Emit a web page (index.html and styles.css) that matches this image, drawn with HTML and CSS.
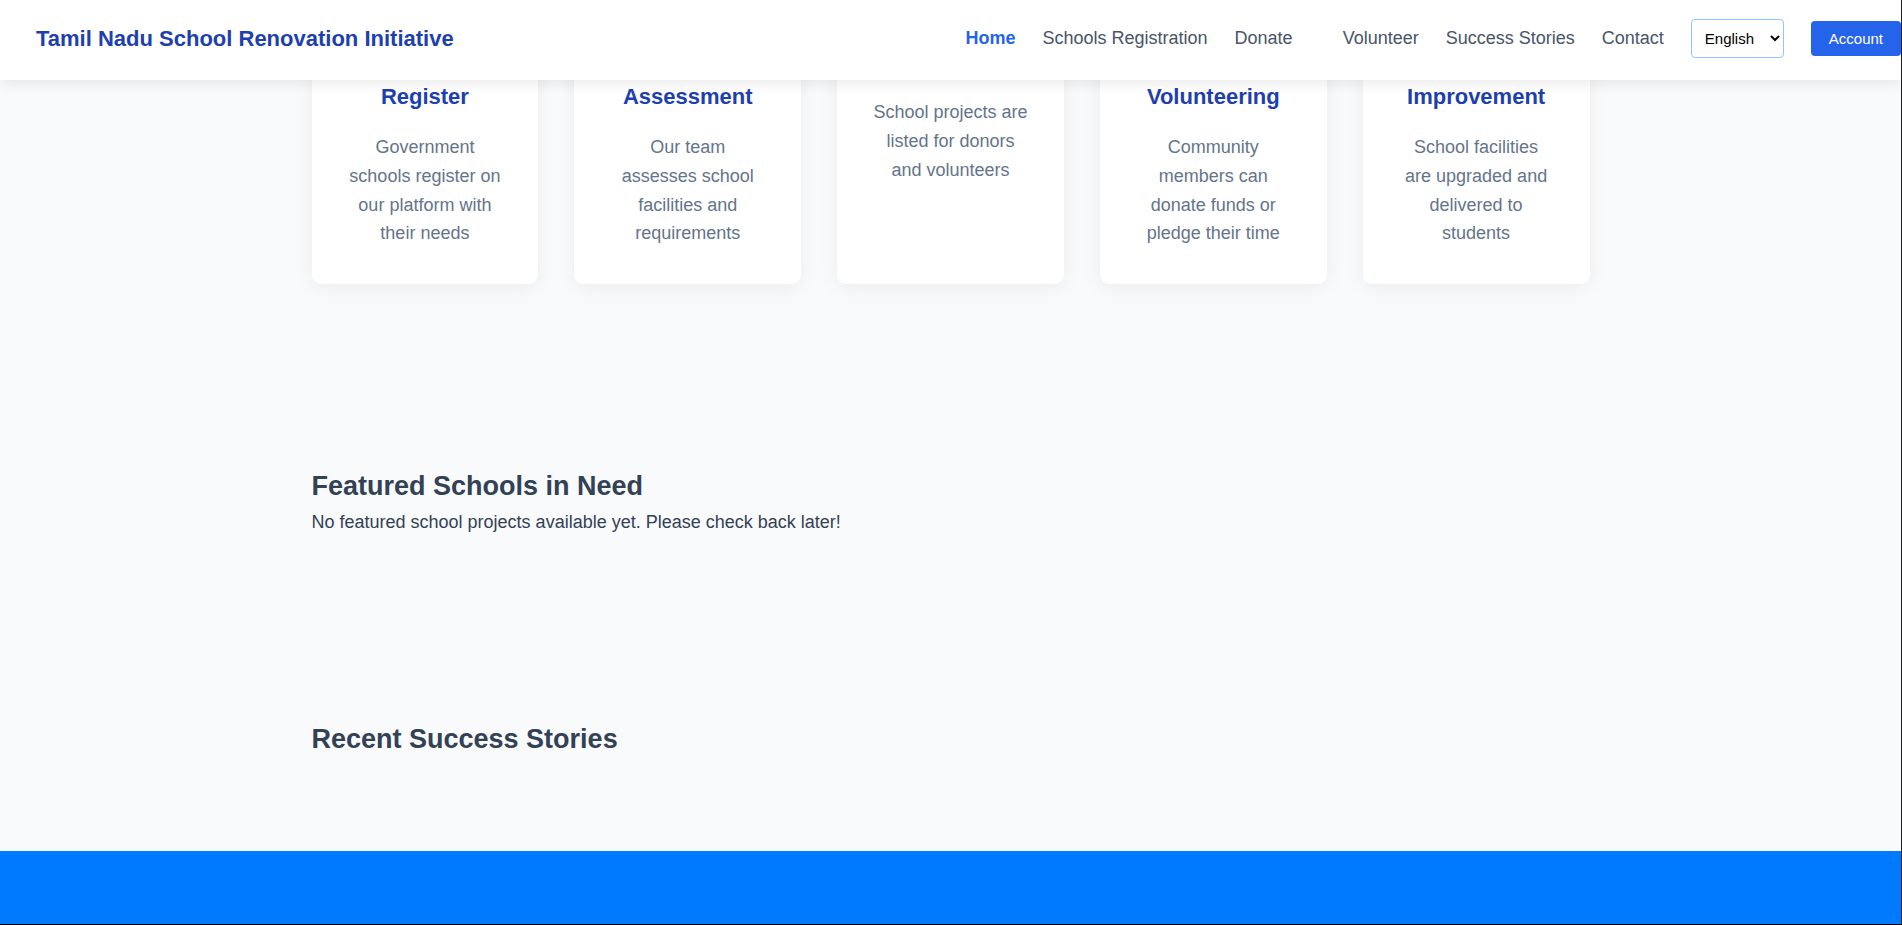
FILE: index.html
```html
<!DOCTYPE html>
<html lang="en">
<head>
<meta charset="utf-8">
<meta name="viewport" content="width=device-width, initial-scale=1">
<title>Tamil Nadu School Renovation Initiative</title>
<link rel="stylesheet" href="styles.css">
</head>
<body>
<header class="site-header">
  <div class="brand">Tamil Nadu School Renovation Initiative</div>
  <nav class="nav">
    <a class="nav-link active" href="#home">Home</a>
    <a class="nav-link" href="#register">Schools Registration</a>
    <a class="nav-link nav-split" href="#donate">Donate</a>
    <a class="nav-link" href="#volunteer">Volunteer</a>
    <a class="nav-link" href="#stories">Success Stories</a>
    <a class="nav-link" href="#contact">Contact</a>
    <select class="language" aria-label="Language"><option>English</option></select>
    <button class="account" type="button">Account</button>
  </nav>
</header>
<main>
  <section class="section steps">
    <div class="step-grid">
      <article class="step">
        <h3>Register</h3>
        <p>Government schools register on our platform with their needs</p>
      </article>
      <article class="step">
        <h3>Assessment</h3>
        <p>Our team assesses school facilities and requirements</p>
      </article>
      <article class="step step-plain">
        <p>School projects are listed for donors and volunteers</p>
      </article>
      <article class="step">
        <h3>Volunteering</h3>
        <p>Community members can donate funds or pledge their time</p>
      </article>
      <article class="step">
        <h3>Improvement</h3>
        <p>School facilities are upgraded and delivered to students</p>
      </article>
    </div>
  </section>
  <section class="section">
    <h2>Featured Schools in Need</h2>
    <p>No featured school projects available yet. Please check back later!</p>
  </section>
  <section class="section" id="stories">
    <h2>Recent Success Stories</h2>
  </section>
</main>
<footer class="site-footer"></footer>
</body>
</html>
```
FILE: styles.css
```css
* {
  box-sizing: border-box;
  margin: 0;
  padding: 0;
}

body {
  display: flex;
  flex-direction: column;
  min-height: 100vh;
  border-right: 1px solid #1c1e21;
  border-bottom: 1px solid #000;
  background: #f9fafc;
  color: #334155;
  font-family: Arial, "Liberation Sans", sans-serif;
  font-size: 18px;
  line-height: 1.6;
}

.site-header {
  position: sticky;
  top: 0;
  z-index: 10;
  display: flex;
  align-items: center;
  justify-content: space-between;
  padding: 19px 0 22px 36px;
  background: #fff;
  box-shadow: 0 4px 12px rgba(0, 0, 0, 0.08);
}

.brand {
  color: #1e40af;
  font-size: 22px;
  font-weight: 700;
}

.nav {
  display: flex;
  align-items: center;
  gap: 27px;
}

.nav-link {
  color: #475569;
  text-decoration: none;
}

.nav-link.active {
  color: #2563eb;
  font-weight: 700;
}

.nav-split {
  margin-right: 23px;
}

.language {
  width: 93px;
  height: 39px;
  padding: 8px 9px;
  border: 1px solid #93c5fd;
  border-radius: 4px;
  background: #fff;
  color: #000;
  font-family: inherit;
  font-size: 15px;
}

.account {
  padding: 9px 18px;
  border: 0;
  border-radius: 4px;
  background: #2563eb;
  color: #fff;
  font-family: inherit;
  font-size: 15px;
}

.section {
  width: 100%;
  max-width: 1350px;
  margin: 0 auto;
  padding: 90px 36px;
}

/* The cards start beneath the sticky header. */
.steps {
  margin-top: -36px;
  padding-top: 0;
}

.step-grid {
  display: grid;
  grid-template-columns: repeat(5, 1fr);
  gap: 36px;
}

.step {
  padding: 36px;
  border-radius: 9px;
  background: #fff;
  box-shadow: 0 4px 20px rgba(0, 0, 0, 0.06);
  text-align: center;
}

.step-plain {
  padding-top: 54px;
}

.step h3 {
  margin-bottom: 19px;
  color: #1e40af;
  font-size: 22px;
  line-height: 34px;
}

.step p {
  color: #64748b;
}

h2 {
  font-size: 27px;
  line-height: 44px;
}

.site-footer {
  flex: 1;
  min-height: 72px;
  background: #007bff;
}
```
